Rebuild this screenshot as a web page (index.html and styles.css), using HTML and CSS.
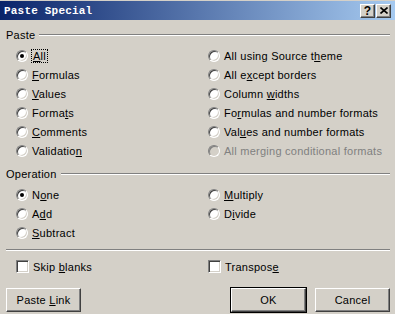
FILE: index.html
```html
<!DOCTYPE html>
<html lang="en">
<head>
  <title>Paste Special</title>
  <meta charset="utf-8">
  <link rel="stylesheet" href="styles.css">
</head>
<body>
  <div class="dialog">
    <div class="titlebar">
      <span class="title">Paste Special</span>
      <div class="caption-buttons">
        <button class="caption-button">?</button>
        <button class="caption-button">
          <svg width="8" height="7" viewBox="0 0 8 7">
            <path d="M0.5 0.5 L7.5 6.5 M7.5 0.5 L0.5 6.5" stroke="#000" stroke-width="1.6" fill="none"/>
          </svg>
        </button>
      </div>
    </div>

    <div class="content">
      <div class="group-heading">
        <span>Paste</span>
        <span class="etched"></span>
      </div>
      <div class="options">
        <label class="option"><span class="radio checked"></span><span class="focus"><u>A</u>ll</span></label>
        <label class="option"><span class="radio"></span><span>All using Source t<u>h</u>eme</span></label>
        <label class="option"><span class="radio"></span><span><u>F</u>ormulas</span></label>
        <label class="option"><span class="radio"></span><span>All e<u>x</u>cept borders</span></label>
        <label class="option"><span class="radio"></span><span><u>V</u>alues</span></label>
        <label class="option"><span class="radio"></span><span>Column <u>w</u>idths</span></label>
        <label class="option"><span class="radio"></span><span>Forma<u>t</u>s</span></label>
        <label class="option"><span class="radio"></span><span>Fo<u>r</u>mulas and number formats</span></label>
        <label class="option"><span class="radio"></span><span><u>C</u>omments</span></label>
        <label class="option"><span class="radio"></span><span>Val<u>u</u>es and number formats</span></label>
        <label class="option"><span class="radio"></span><span>Validatio<u>n</u></span></label>
        <label class="option disabled"><span class="radio"></span><span>All merging conditional formats</span></label>
      </div>

      <div class="group-heading operation">
        <span>Operation</span>
        <span class="etched"></span>
      </div>
      <div class="options">
        <label class="option"><span class="radio checked"></span><span>N<u>o</u>ne</span></label>
        <label class="option"><span class="radio"></span><span><u>M</u>ultiply</span></label>
        <label class="option"><span class="radio"></span><span>A<u>d</u>d</span></label>
        <label class="option"><span class="radio"></span><span>D<u>i</u>vide</span></label>
        <label class="option"><span class="radio"></span><span><u>S</u>ubtract</span></label>
      </div>

      <div class="etched separator"></div>

      <div class="options checks">
        <label class="option"><span class="checkbox"></span><span>Skip <u>b</u>lanks</span></label>
        <label class="option"><span class="checkbox"></span><span>Transpos<u>e</u></span></label>
      </div>

      <div class="actions">
        <button class="button">Paste <u>L</u>ink</button>
        <div class="actions-right">
          <button class="button default">OK</button>
          <button class="button">Cancel</button>
        </div>
      </div>
    </div>
  </div>
</body>
</html>
```

FILE: styles.css
```css
* {
  box-sizing: border-box;
}

body {
  margin: 0;
  background-color: #D4D0C8;
  color: #000000;
  font-family: "Liberation Sans", Arial, sans-serif;
  font-size: 11px;
  letter-spacing: 0.25px;
  white-space: nowrap;
}

.dialog {
  width: 395px;
  height: 314px;
  padding-top: 1px;
}

.titlebar {
  height: 19px;
  display: flex;
  align-items: center;
  justify-content: space-between;
  padding: 0 4px 0 4px;
  background: linear-gradient(to right, #0A246A, #A6CAF0);
}

.title {
  color: #FFFFFF;
  font-family: "Liberation Mono", monospace;
  font-weight: bold;
  font-size: 11px;
  letter-spacing: 0.2px;
}

.caption-buttons {
  display: flex;
  gap: 1px;
}

.caption-button {
  width: 15px;
  height: 14px;
  padding: 0;
  display: flex;
  align-items: center;
  justify-content: center;
  background-color: #D4D0C8;
  border: 1px solid;
  border-color: #FFFFFF #404040 #404040 #FFFFFF;
  box-shadow: inset -1px -1px #808080;
  font-family: "Liberation Sans", Arial, sans-serif;
  font-weight: bold;
  font-size: 12px;
  line-height: 1;
  color: #000000;
}

.content {
  padding: 0 5px 0 6px;
}

.group-heading {
  height: 14px;
  margin-top: 8px;
  display: flex;
  align-items: center;
  gap: 4px;
}

.group-heading.operation {
  margin-top: 7px;
}

.etched {
  flex: 1;
  height: 2px;
  border-top: 1px solid #808080;
  border-bottom: 1px solid #FFFFFF;
}

.separator {
  margin-top: 7px;
}

.options {
  display: grid;
  grid-template-columns: 192px 1fr;
  grid-auto-rows: 19px;
  margin-top: 4px;
  padding-left: 10px;
}

.option {
  display: flex;
  align-items: center;
  gap: 4px;
}

.option.disabled {
  color: #808080;
}

.radio {
  position: relative;
  width: 12px;
  height: 12px;
  flex-shrink: 0;
  border-radius: 50%;
  background-color: #FFFFFF;
  border: 1px solid;
  border-color: #808080 #FFFFFF #FFFFFF #808080;
  box-shadow: inset 1px 1px #404040, inset -1px -1px #D4D0C8;
}

.radio.checked::after {
  content: "";
  position: absolute;
  left: 3px;
  top: 3px;
  width: 4px;
  height: 4px;
  border-radius: 50%;
  background-color: #000000;
}

.disabled .radio {
  background-color: #D4D0C8;
  box-shadow: inset 1px 1px #808080;
}

.checkbox {
  width: 13px;
  height: 13px;
  flex-shrink: 0;
  background-color: #FFFFFF;
  border: 1px solid;
  border-color: #808080 #FFFFFF #FFFFFF #808080;
  box-shadow: inset 1px 1px #404040, inset -1px -1px #D4D0C8;
}

.checks {
  margin-top: 6px;
}

.focus {
  padding: 0 1px;
  outline: 1px dotted #000000;
}

u {
  text-decoration-thickness: 1px;
  text-underline-offset: 1px;
}

.actions {
  margin-top: 12px;
  display: flex;
  justify-content: space-between;
}

.actions-right {
  display: flex;
  gap: 9px;
}

.button {
  width: 75px;
  height: 24px;
  padding: 0;
  background-color: #D4D0C8;
  border: 1px solid;
  border-color: #FFFFFF #404040 #404040 #FFFFFF;
  box-shadow: inset -1px -1px #808080;
  font-family: inherit;
  font-size: 11px;
  letter-spacing: inherit;
  color: #000000;
}

.button.default {
  outline: 1px solid #000000;
  outline-offset: 0;
}
```
